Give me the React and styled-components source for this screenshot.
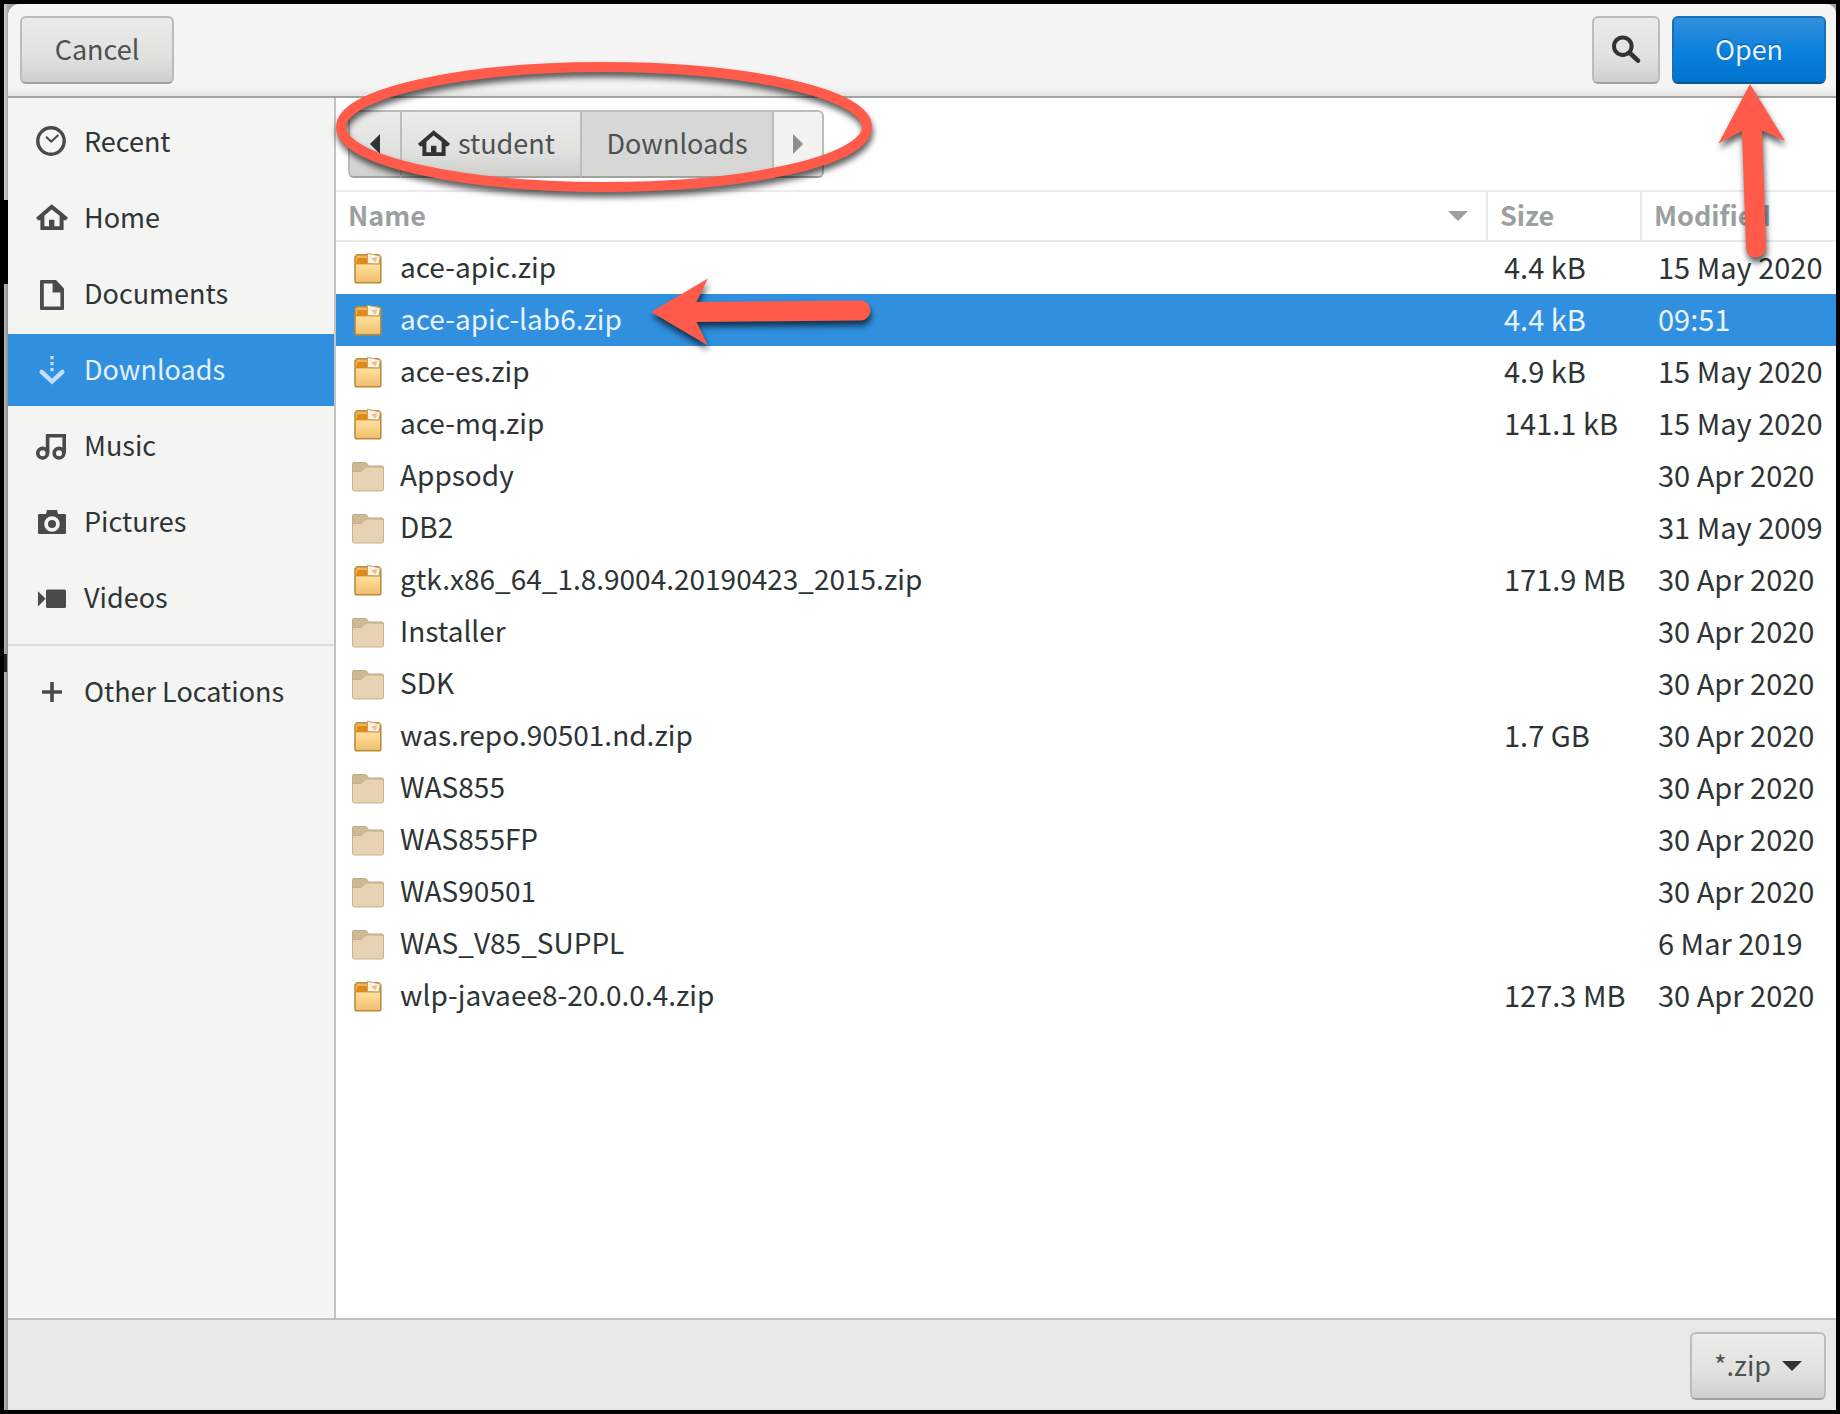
import React from "react";
import styled, { createGlobalStyle, css } from "styled-components";

const GlobalStyle = createGlobalStyle`
  *, *::before, *::after { box-sizing: border-box; }
  body { margin: 0; background: #000; }
  button, select, table { font: inherit; color: inherit; }
  body {
    font-family: "Noto Sans CJK JP", "Noto Sans", sans-serif;
    font-size: 27px;
    line-height: 40px;
    color: #2e3436;
  }
`;

const Desktop = styled.div`
  min-height: 100vh;
  display: flex;
  border: 4px solid #000;
  background: #a4a4a2;
`;

const DesktopEdge = styled.div`
  flex: none;
  width: 4px;
  background:
    linear-gradient(#000, #000) 0 196px / 4px 84px no-repeat,
    linear-gradient(#222, #222) 0 650px / 3px 18px no-repeat,
    linear-gradient(90deg, #d2d2d0, #a9a7a6) 0 0 / 4px 196px no-repeat,
    linear-gradient(90deg, #b9b9b8, #8e8e8d);
`;

const Dialog = styled.div`
  flex: 1;
  min-width: 0;
  display: flex;
  flex-direction: column;
  border-radius: 12px 10px 0 0;
  background: #fff;
`;

const HeaderBar = styled.header`
  display: flex;
  align-items: flex-start;
  gap: 12px;
  height: 94px;
  padding: 12px 10px 0 12px;
  border-bottom: 2px solid #a3a39f;
  border-radius: 12px 10px 0 0;
  background: linear-gradient(#f4f4f4 0 84px, #e3e3e2);
`;

const Spacer = styled.div`
  flex: 1;
`;

const raised = css`
  border: 2px solid #bcbcb8;
  border-bottom-color: #a2a29e;
  background: linear-gradient(#ebebea, #e1e1df 60%, #cfcfcc);
  color: #4c5153;
`;

const Button = styled.button`
  ${raised}
  display: flex;
  align-items: center;
  justify-content: center;
  width: ${(p) => (p.$square ? "68px" : "154px")};
  height: 68px;
  padding: 0 0 2px;
  border-radius: 6px;
  ${(p) =>
    p.$suggested &&
    css`
      border-color: #1a6fb9;
      border-bottom-color: #0d5797;
      background: linear-gradient(#3390df, #0a80dc 55%, #0073cc);
      color: #e6f2fc;
      text-shadow: 0 -1px 1px rgba(0, 50, 100, 0.6);
    `}
`;

const Anchor = styled.div`
  position: relative;
`;

const Body = styled.div`
  flex: 1;
  display: flex;
`;

const Sidebar = styled.nav`
  flex: none;
  display: flex;
  flex-direction: column;
  gap: 4px;
  width: 328px;
  padding-top: 8px;
  border-right: 2px solid #c3c3c1;
  background: #f4f4f2;
`;

const Place = styled.a`
  display: flex;
  align-items: center;
  gap: 16px;
  height: 72px;
  padding: 0 28px 2px;
  color: ${(p) => (p.$current ? "#e4f1fd" : "#2e3436")};
  background: ${(p) => (p.$current ? "#3090df" : "none")};
  text-decoration: none;

  svg {
    margin-top: 2px;
    color: ${(p) => (p.$current ? "#c5dff7" : "#4a4a47")};
  }
`;

const Divider = styled.hr`
  width: 100%;
  height: 2px;
  margin: 6px 0;
  border: 0;
  background: #dededc;
`;

const Files = styled.main`
  flex: 1;
  min-width: 0;
`;

const PathRow = styled.div`
  display: flex;
  padding: 12px;
`;

const PathBar = styled.div`
  position: relative;
  display: flex;
`;

const PathButton = styled.button`
  ${raised}
  display: flex;
  align-items: center;
  justify-content: ${(p) => (p.$start ? "flex-start" : "center")};
  gap: 8px;
  height: 68px;
  width: ${(p) => p.$width};
  padding: 0 0 2px ${(p) => (p.$start ? "16px" : "0")};
  border-right-width: 0;

  svg { margin-top: 2px; color: #2e3436; }

  &:first-child { border-radius: 6px 0 0 6px; }
  &:last-of-type {
    border-right-width: 2px;
    border-radius: 0 6px 6px 0;
  }
  ${(p) => p.$pressed && css`background: #d7d7d5;`}
  ${(p) =>
    p.$dim &&
    css`
      background: #f2f2f1;
      svg { color: #8d9091; }
    `}
`;

const FileTable = styled.table`
  width: 100%;
  table-layout: fixed;
  border-spacing: 0;
  border-top: 2px solid #ebebeb;
`;

const Column = styled.col`
  width: ${(p) => p.$width};
`;

const Heading = styled.th`
  height: 50px;
  padding: 0 0 2px 12px;
  border-bottom: 2px solid #e8e8e8;
  text-align: left;
  font-weight: 700;
  line-height: 40px;
  color: #9b9fa0;

  & + & { border-left: 2px solid #e8e8e8; }
`;

const HeadingLabel = styled.span`
  display: flex;
  align-items: center;
  justify-content: space-between;
  padding-right: 18px;

  svg { margin-top: 2px; }
`;

const Row = styled.tr`
  ${(p) =>
    p.$selected &&
    css`
      background: #3090df;
      color: #e8f3fd;
    `}
`;

const Cell = styled.td`
  height: 52px;
  padding: 0 0 4px 18px;
  font-size: 29px;
  white-space: nowrap;
`;

const FileName = styled.div`
  position: relative;
  display: flex;
  align-items: center;
  gap: 16px;
  margin-left: -2px;
  font-size: 28px;

  > svg:first-child { margin-top: 4px; }
`;

const Footer = styled.footer`
  display: flex;
  justify-content: flex-end;
  height: 92px;
  padding: 12px 10px;
  border-top: 2px solid #c0c0be;
  background: #e8e8e6;
`;

const FilterBox = styled.label`
  position: relative;

  svg {
    position: absolute;
    right: 24px;
    top: 29px;
    color: #2e3436;
    pointer-events: none;
  }
`;

const Filter = styled.select`
  ${raised}
  appearance: none;
  width: 136px;
  height: 68px;
  padding: 0 0 2px 22px;
  border-radius: 6px;
`;

const Mark = styled.svg`
  position: absolute;
  z-index: 2;
  left: ${(p) => p.$left};
  top: ${(p) => p.$top};
  overflow: visible;
  pointer-events: none;
  filter: drop-shadow(1px 5px 3px rgba(0, 0, 0, 0.65));
`;

const Glyph = ({ size = 32, children }) => (
  <svg width={size} height={size} viewBox="0 0 16 16" fill="currentColor" aria-hidden="true">
    {children}
  </svg>
);

const HomeIcon = () => (
  <Glyph>
    <path
      fillRule="evenodd"
      d="M7.8 1.1 0 7.9l1 1.2h1.2V14h11.6V9.1H15l1-1.2-3-2.6ZM7.8 3.7 4.2 6.9v5.2h2.3V8.9h2.7v3.2h2.6V6.9Z"
    />
  </Glyph>
);

const icons = {
  recent: (
    <Glyph>
      <circle cx="7.5" cy="7.5" r="6.6" fill="none" stroke="currentColor" strokeWidth="1.7" />
      <path d="m5 5.4 2.6 2.4 3.6-3.3" fill="none" stroke="currentColor" strokeWidth="1" />
    </Glyph>
  ),
  home: <HomeIcon />,
  documents: (
    <Glyph>
      <path
        fillRule="evenodd"
        d="M2 1.6Q2 1 2.6 1H10l4 4.2v10.2q0 .6-.6.6H2.6q-.6 0-.6-.6ZM3.9 2.8v11.4h8.3V7.2H8.3V2.8Z"
      />
    </Glyph>
  ),
  downloads: (
    <Glyph>
      <path d="M7.2 1h1.6v1.6H7.2ZM7.2 4h1.6v1.6H7.2ZM7.2 7h1.6v1.6H7.2Z" />
      <path d="m2.8 8.9 5.2 4.9 5.2-4.9" fill="none" stroke="currentColor" strokeWidth="2.2" strokeLinecap="round" />
    </Glyph>
  ),
  music: (
    <Glyph>
      <g fill="none" stroke="currentColor" strokeWidth="1.8">
        <circle cx="3.3" cy="11.6" r="2.4" />
        <circle cx="11.5" cy="11.6" r="2.4" />
        <path d="M5.8 11.6V2.9h8.3v8.7" />
      </g>
    </Glyph>
  ),
  pictures: (
    <Glyph>
      <path
        fillRule="evenodd"
        d="M1 4.6Q1 4 1.6 4H5l.5-2h5L11 4h3.4q.6 0 .6.6v8.8q0 .6-.6.6H1.6q-.6 0-.6-.6ZM8 5.1a3.9 3.9 0 1 0 0 7.8 3.9 3.9 0 0 0 0-7.8Z"
      />
      <circle cx="8" cy="9" r="2" />
    </Glyph>
  ),
  videos: (
    <Glyph>
      <rect x="5" y="3.8" width="10" height="9.2" rx=".8" />
      <path d="m1 4.6 3.8 3.8L1 12.2Z" />
    </Glyph>
  ),
  other: (
    <Glyph>
      <path d="M3 7.1h4.1V3h1.8v4.1H13v1.8H8.9V13H7.1V8.9H3Z" />
    </Glyph>
  ),
};

const SearchIcon = () => (
  <Glyph>
    <circle cx="6.4" cy="6.6" r="4.4" fill="none" stroke="#2e3436" strokeWidth="2" />
    <path d="m9.8 9.9 4.2 3.9" stroke="#2e3436" strokeWidth="2.3" strokeLinecap="round" />
  </Glyph>
);

const Triangle = ({ direction }) => {
  const shapes = {
    left: [10, 20, "M10 0v20L0 10Z"],
    right: [10, 20, "M0 0v20l10-10Z"],
    down: [20, 10, "M0 0h20L10 10Z"],
  };
  const [w, h, d] = shapes[direction];
  return (
    <svg width={w} height={h} viewBox={`0 0 ${w} ${h}`} fill="currentColor" aria-hidden="true">
      <path d={d} />
    </svg>
  );
};

const ZipIcon = () => (
  <svg width="32" height="32" viewBox="0 0 32 32" aria-hidden="true">
    <defs>
      <linearGradient id="zipFront" x1="0" y1="0" x2="0" y2="1">
        <stop offset="0" stopColor="#ffe0a2" />
        <stop offset="1" stopColor="#f0c06c" />
      </linearGradient>
    </defs>
    <path d="M5 2.8h21.500L28.800 5v24q0 1.800-1.800 1.800H4.800Q3 30.800 3 29V5Z" fill="#f0b75a" stroke="#b78a3c" strokeWidth="1.500" />
    <path d="M5.500 6H27l.8 6.500H4Z" fill="#e08a1a" />
    <path d="M4 12.500h24V28q0 1.800-1.800 1.800H5.800Q4 29.800 4 28Z" fill="url(#zipFront)" />
    <path d="M15.500 1.200 28.300 4 27 12l-11.500-.5Z" fill="#fdf0dc" stroke="#c9a063" strokeWidth="1" />
    <path d="m19 6.500 6.500-1.500-2 5.500Z" fill="#dcc5a4" />
  </svg>
);

const FolderIcon = () => (
  <svg width="32" height="32" viewBox="0 0 32 32" aria-hidden="true">
    <path d="M.5 4Q.5 2.500 2 2.500h11.500q1 0 1.500 1L16.500 6H30q1.500 0 1.500 1.500V15H.5Z" fill="#cdb993" stroke="#c0aa86" />
    <path d="M.5 11.500h7.500q1.500 0 2.500-1l2.500-2.500q.8-1 2.500-1H30q1.500 0 1.500 1.500v20.500q0 2-2 2h-27q-2 0-2-2Z" fill="#e8d2b4" stroke="#c8b08c" />
  </svg>
);

const places = [
  ["recent", "Recent"],
  ["home", "Home"],
  ["documents", "Documents"],
  ["downloads", "Downloads"],
  ["music", "Music"],
  ["pictures", "Pictures"],
  ["videos", "Videos"],
];

const files = [
  ["ace-apic.zip", "4.4 kB", "15 May 2020"],
  ["ace-apic-lab6.zip", "4.4 kB", "09:51"],
  ["ace-es.zip", "4.9 kB", "15 May 2020"],
  ["ace-mq.zip", "141.1 kB", "15 May 2020"],
  ["Appsody", "", "30 Apr 2020"],
  ["DB2", "", "31 May 2009"],
  ["gtk.x86_64_1.8.9004.20190423_2015.zip", "171.9 MB", "30 Apr 2020"],
  ["Installer", "", "30 Apr 2020"],
  ["SDK", "", "30 Apr 2020"],
  ["was.repo.90501.nd.zip", "1.7 GB", "30 Apr 2020"],
  ["WAS855", "", "30 Apr 2020"],
  ["WAS855FP", "", "30 Apr 2020"],
  ["WAS90501", "", "30 Apr 2020"],
  ["WAS_V85_SUPPL", "", "6 Mar 2019"],
  ["wlp-javaee8-20.0.0.4.zip", "127.3 MB", "30 Apr 2020"],
];

const selectedFile = "ace-apic-lab6.zip";

export default function App() {
  return (
    <Desktop>
      <GlobalStyle />
      <DesktopEdge />
      <Dialog role="dialog" aria-label="Open file">
        <HeaderBar>
          <Button type="button">Cancel</Button>
          <Spacer />
          <Button type="button" $square aria-label="Search">
            <SearchIcon />
          </Button>
          <Anchor>
            <Button type="button" $suggested>Open</Button>
            <Mark $left="46px" $top="68px" width="68" height="176" viewBox="0 0 68 176" aria-hidden="true">
              <path d="M32 0 67 57 44 46.500 48 163a10 10 0 0 1-20 1L24 47 .5 59.500Z" fill="#ff5a4a" />
            </Mark>
          </Anchor>
        </HeaderBar>

        <Body>
          <Sidebar aria-label="Places">
            {places.map(([id, label]) => (
              <Place key={id} href={`#${id}`} $current={id === "downloads"}>
                {icons[id]}
                {label}
              </Place>
            ))}
            <Divider />
            <Place href="#other">
              {icons.other}
              Other Locations
            </Place>
          </Sidebar>

          <Files>
            <PathRow>
              <PathBar>
                <PathButton type="button" $width="52px" aria-label="Back">
                  <Triangle direction="left" />
                </PathButton>
                <PathButton type="button" $width="180px" $start>
                  <HomeIcon />
                  student
                </PathButton>
                <PathButton type="button" $width="192px" $pressed>Downloads</PathButton>
                <PathButton type="button" $width="52px" $dim aria-label="Forward">
                  <Triangle direction="right" />
                </PathButton>
                <Mark $left="-12px" $top="-48px" width="536" height="130" viewBox="0 0 536 130" aria-hidden="true">
                  <ellipse cx="268" cy="65" rx="263" ry="60" fill="none" stroke="#ff5a4a" strokeWidth="10" />
                </Mark>
              </PathBar>
            </PathRow>

            <FileTable>
              <colgroup>
                <Column />
                <Column $width="154px" />
                <Column $width="196px" />
              </colgroup>
              <thead>
                <tr>
                  <Heading scope="col" aria-sort="ascending">
                    <HeadingLabel>
                      Name
                      <Triangle direction="down" />
                    </HeadingLabel>
                  </Heading>
                  <Heading scope="col">Size</Heading>
                  <Heading scope="col">Modified</Heading>
                </tr>
              </thead>
              <tbody>
                {files.map(([name, size, modified]) => (
                  <Row key={name} $selected={name === selectedFile}>
                    <Cell>
                      <FileName>
                        {name.endsWith(".zip") ? <ZipIcon /> : <FolderIcon />}
                        {name}
                        {name === selectedFile && (
                          <Mark $left="299px" $top="-20px" width="220" height="68" viewBox="0 0 220 68" aria-hidden="true">
                            <path d="M0 34 57 .5 45.500 24 209 22.500a10 10 0 0 1 1 20L45.500 44 57 67.500Z" fill="#ff5a4a" />
                          </Mark>
                        )}
                      </FileName>
                    </Cell>
                    <Cell>{size}</Cell>
                    <Cell>{modified}</Cell>
                  </Row>
                ))}
              </tbody>
            </FileTable>
          </Files>
        </Body>

        <Footer>
          <FilterBox>
            <Filter aria-label="File type" defaultValue="zip">
              <option value="zip">*.zip</option>
            </Filter>
            <Triangle direction="down" />
          </FilterBox>
        </Footer>
      </Dialog>
    </Desktop>
  );
}
